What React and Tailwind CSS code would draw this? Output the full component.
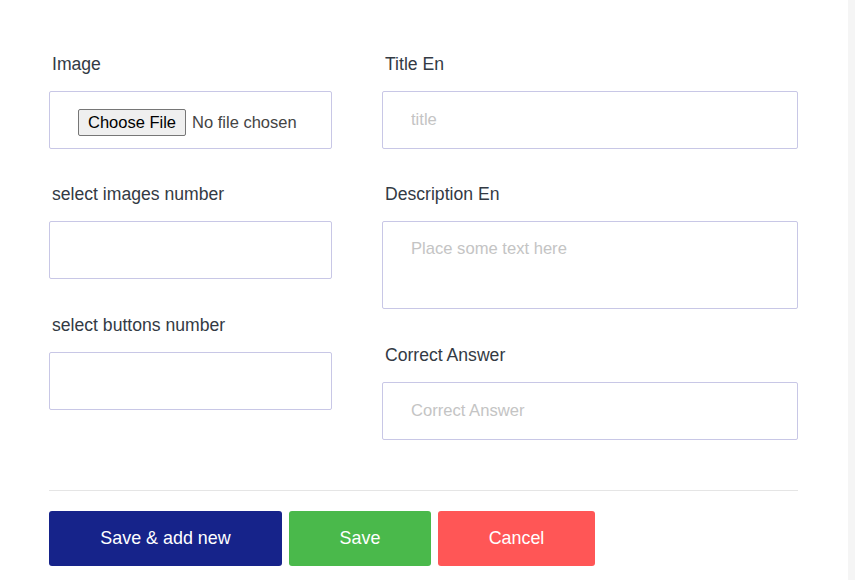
import React from 'react';

const inputCls = "block w-full h-[58px] border border-[#c8c7e6] rounded-[2px] pl-[28px] pr-3 text-[16.6px] text-[#333] placeholder:text-[#c4c4c4] outline-none bg-white";

const Field = ({ label, children, className = "" }) => (
  <div className={className}>
    <label className="block pl-[3px] text-[17.6px] leading-[24px] text-[#333a44] mb-[15px]">{label}</label>
    {children}
  </div>
);

const App = () => {
  return (
    <div className="flex min-h-[580px] bg-[#f5f5f5]" style={{ fontFamily: '"Liberation Sans", Arial, sans-serif' }}>
      <div className="w-[848px] bg-white pl-[49px] pr-[50px] pt-[52px]">
        <div className="flex gap-[50px]">
          <div className="w-[283px]">
            <Field label="Image" className="mb-[33px]">
              <div className="h-[58px] border border-[#c8c7e6] rounded-[2px] pl-[28px] pt-[5px] flex items-center">
                <input type="file" className="text-[16.5px] text-[#444] file:text-[16.5px] file:text-black file:bg-[#efefef] file:border file:border-[#767676] file:rounded-[2px] file:px-[9px] file:py-[0px] file:mr-[6px]" />
              </div>
            </Field>
            <Field label="select images number" className="mb-[34px]">
              <input type="text" className={inputCls} />
            </Field>
            <Field label="select buttons number">
              <input type="text" className={inputCls + " h-[57px]"} />
            </Field>
          </div>
          <div className="w-[416px]">
            <Field label="Title En" className="mb-[33px]">
              <input type="text" placeholder="title" className={inputCls} />
            </Field>
            <Field label="Description En" className="mb-[34px]">
              <textarea placeholder="Place some text here" className="block w-full h-[88px] border border-[#c8c7e6] rounded-[2px] pl-[28px] pr-3 pt-[15px] text-[16.6px] text-[#333] placeholder:text-[#c4c4c4] outline-none resize-none" />
            </Field>
            <Field label="Correct Answer">
              <input type="text" placeholder="Correct Answer" className={inputCls} />
            </Field>
          </div>
        </div>
        <div className="mt-[50px] border-t border-[#e5e5e5] pt-[20px] flex gap-[7px]">
          <button className="w-[233px] h-[55px] rounded-[3px] bg-[#16238a] text-white text-[17.9px]">Save &amp; add new</button>
          <button className="w-[142px] h-[55px] rounded-[3px] bg-[#4ab94b] text-white text-[17.9px]">Save</button>
          <button className="w-[157px] h-[55px] rounded-[3px] bg-[#ff5656] text-white text-[17.9px]">Cancel</button>
        </div>
      </div>
    </div>
  );
};

export default App;
